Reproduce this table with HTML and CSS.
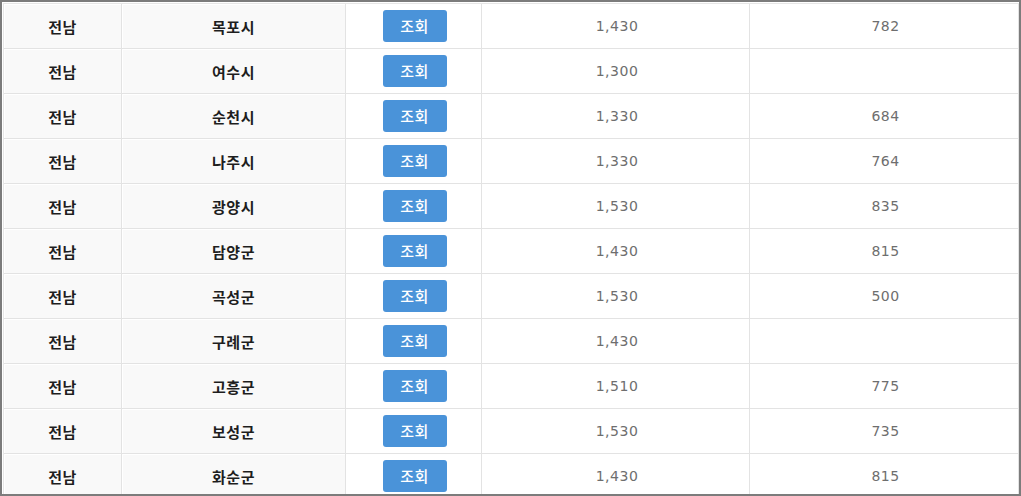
FILE: index.html
```html
<!DOCTYPE html>
<html lang="ko">
<head>
<meta charset="utf-8">
<link rel="stylesheet" href="styles.css">
</head>
<body>
<div class="frame">
<table class="grid">
<colgroup><col class="c1"><col class="c2"><col class="c3"><col class="c4"><col class="c5"></colgroup>
<tbody>
<tr><td class="k">전남</td><td class="k">목포시</td><td class="b"><span class="btn">조회</span></td><td class="n">1,430</td><td class="n">782</td></tr>
<tr><td class="k">전남</td><td class="k">여수시</td><td class="b"><span class="btn">조회</span></td><td class="n">1,300</td><td class="n"></td></tr>
<tr><td class="k">전남</td><td class="k">순천시</td><td class="b"><span class="btn">조회</span></td><td class="n">1,330</td><td class="n">684</td></tr>
<tr><td class="k">전남</td><td class="k">나주시</td><td class="b"><span class="btn">조회</span></td><td class="n">1,330</td><td class="n">764</td></tr>
<tr><td class="k">전남</td><td class="k">광양시</td><td class="b"><span class="btn">조회</span></td><td class="n">1,530</td><td class="n">835</td></tr>
<tr><td class="k">전남</td><td class="k">담양군</td><td class="b"><span class="btn">조회</span></td><td class="n">1,430</td><td class="n">815</td></tr>
<tr><td class="k">전남</td><td class="k">곡성군</td><td class="b"><span class="btn">조회</span></td><td class="n">1,530</td><td class="n">500</td></tr>
<tr><td class="k">전남</td><td class="k">구례군</td><td class="b"><span class="btn">조회</span></td><td class="n">1,430</td><td class="n"></td></tr>
<tr><td class="k">전남</td><td class="k">고흥군</td><td class="b"><span class="btn">조회</span></td><td class="n">1,510</td><td class="n">775</td></tr>
<tr><td class="k">전남</td><td class="k">보성군</td><td class="b"><span class="btn">조회</span></td><td class="n">1,530</td><td class="n">735</td></tr>
<tr><td class="k">전남</td><td class="k">화순군</td><td class="b"><span class="btn">조회</span></td><td class="n">1,430</td><td class="n">815</td></tr>
</tbody>
</table>
</div>
</body>
</html>
```

FILE: styles.css
```css
html, body {
  margin: 0;
  padding: 0;
  background: #ffffff;
}
.frame {
  width: 1021px;
  height: 496px;
  box-sizing: border-box;
  border: 2px solid #7c7c7c;
  padding: 1px 0 0 1px;
  overflow: hidden;
  background: #ffffff;
}
.grid {
  width: 1016px;
  table-layout: fixed;
  border-collapse: separate;
  border-spacing: 0;
  border-top: 1px solid #e6e6e6;
  border-left: 1px solid #e6e6e6;
}
.c1 { width: 118px; }
.c2 { width: 224px; }
.c3 { width: 136px; }
.c4 { width: 268px; }
.c5 { width: 269px; }
.grid td {
  height: 44px;
  padding: 0;
  text-align: center;
  vertical-align: middle;
  border-right: 1px solid #e3e3e3;
  border-bottom: 1px solid #e3e3e3;
  box-shadow: inset 1px 1px 0 #ffffff;
}
.grid td.k {
  background: #f9f9f9;
  font-family: "Noto Sans CJK KR", "Noto Sans", sans-serif;
  font-weight: 700;
  font-size: 15px;
  letter-spacing: 0.5px;
  color: #1e1e1e;
}
.grid td.n {
  background: #ffffff;
  font-family: "DejaVu Sans", "Noto Sans", sans-serif;
  font-size: 14px;
  letter-spacing: 0.5px;
  color: #6e6e6e;
  padding-left: 3px;
}
.grid td.b {
  background: #ffffff;
}
.btn {
  display: inline-block;
  width: 64px;
  height: 32px;
  line-height: 32px;
  margin-left: 2px;
  border-radius: 3px;
  background: #4a93d9;
  color: #ffffff;
  font-family: "Noto Sans CJK KR", "Noto Sans", sans-serif;
  font-size: 15px;
  font-weight: 500;
  letter-spacing: 0.5px;
  vertical-align: middle;
}
```
